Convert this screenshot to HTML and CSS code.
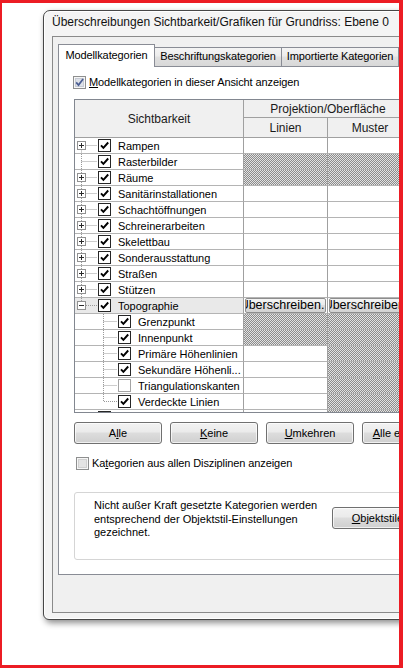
FILE: index.html
```html
<!DOCTYPE html>
<html lang="de">
<head>
    <meta charset="UTF-8">
    <meta name="viewport" content="width=device-width, initial-scale=1.0">
    <title>Überschreibungen Sichtbarkeit/Grafiken</title>
    <link rel="stylesheet" href="styles.css">
</head>
<body>
    <svg class="defs" aria-hidden="true">
        <symbol id="tw-first">
            <path d="M6.5 7.5V15M6.5 7.5H22" stroke="#9a9a9a" stroke-dasharray="1 1" fill="none"/>
            <rect x="2.5" y="3.5" width="8" height="8" fill="#fff" stroke="#919191"/>
            <path d="M4 7.5h5M6.5 5v5" stroke="#2a2a2a"/>
        </symbol>
        <symbol id="tw-plus">
            <path d="M6.5 0V15M6.5 7.5H22" stroke="#9a9a9a" stroke-dasharray="1 1" fill="none"/>
            <rect x="2.5" y="3.5" width="8" height="8" fill="#fff" stroke="#919191"/>
            <path d="M4 7.5h5M6.5 5v5" stroke="#2a2a2a"/>
        </symbol>
        <symbol id="tw-leaf">
            <path d="M6.5 0V15M6.5 7.5H22" stroke="#9a9a9a" stroke-dasharray="1 1" fill="none"/>
        </symbol>
        <symbol id="tw-minus">
            <path d="M6.5 0V7.5H22" stroke="#9a9a9a" stroke-dasharray="1 1" fill="none"/>
            <rect x="2.5" y="3.5" width="8" height="8" fill="#fff" stroke="#919191"/>
            <path d="M4 7.5h5" stroke="#2a2a2a"/>
        </symbol>
        <symbol id="tw-box">
            <rect x="2.5" y="3.5" width="8" height="8" fill="#fff" stroke="#919191"/>
            <path d="M4 7.5h5M6.5 5v5" stroke="#2a2a2a"/>
        </symbol>
        <symbol id="tw-child">
            <path d="M28.5 0V15M28.5 7.5H42" stroke="#9a9a9a" stroke-dasharray="1 1" fill="none"/>
        </symbol>
        <symbol id="tw-child-last">
            <path d="M28.5 0V7.5H42" stroke="#9a9a9a" stroke-dasharray="1 1" fill="none"/>
        </symbol>
        <symbol id="cb-on">
            <rect x=".5" y=".5" width="12" height="12" fill="#fff" stroke="#262626"/>
            <path d="M3 6.3l2.4 2.6 4.8-5.4" fill="none" stroke="#000" stroke-width="1.9"/>
        </symbol>
        <symbol id="cb-off">
            <rect x=".5" y=".5" width="12" height="12" fill="#fff" stroke="#a4a4a4"/>
        </symbol>
        <symbol id="cbv-on">
            <rect x=".5" y=".5" width="12" height="12" fill="#f6f6f6" stroke="#8e8f8f"/>
            <rect x="2.5" y="2.5" width="8" height="8" fill="#dde1e8" stroke="#c6cad3"/>
            <path d="M3.2 6.4l2.3 2.7 4.6-6.2" fill="none" stroke="#4b5e93" stroke-width="1.7"/>
        </symbol>
        <symbol id="cbv-off">
            <rect x=".5" y=".5" width="12" height="12" fill="#f6f6f6" stroke="#8e8f8f"/>
            <rect x="2.5" y="2.5" width="8" height="8" fill="#e4e4e4" stroke="#d0d0d0"/>
        </symbol>
    </svg>

    <div class="screen">
        <div class="dialog">
            <div class="titlebar">Überschreibungen Sichtbarkeit/Grafiken für Grundriss: Ebene 0</div>

            <div class="client">
                <div class="tabs">
                    <div class="tab tab-model active">Modellkategorien</div>
                    <div class="tab tab-annot">Beschriftungskategorien</div>
                    <div class="tab tab-import">Importierte Kategorien</div>
                </div>

                <div class="panel">
                    <div class="check-row top">
                        <svg class="cbv"><use href="#cbv-on"/></svg>
                        <span><u>M</u>odellkategorien in dieser Ansicht anzeigen</span>
                    </div>

                    <div class="vg">
                        <div class="vg-head">
                            <div class="h-cell h-name">Sichtbarkeit</div>
                            <div class="h-cell h-proj">Projektion/Oberfläche</div>
                            <div class="h-cell h-lines">Linien</div>
                            <div class="h-cell h-pattern">Muster</div>
                        </div>

                        <div class="vg-row">
                            <div class="vg-name"><svg class="twig"><use href="#tw-first"/></svg><svg class="cb"><use href="#cb-on"/></svg><span class="vg-label">Rampen</span></div>
                            <div class="vg-cell"></div>
                            <div class="vg-cell"></div>
                        </div>
                        <div class="vg-row">
                            <div class="vg-name"><svg class="twig"><use href="#tw-leaf"/></svg><svg class="cb"><use href="#cb-on"/></svg><span class="vg-label">Rasterbilder</span></div>
                            <div class="vg-cell hatch"></div>
                            <div class="vg-cell hatch"></div>
                        </div>
                        <div class="vg-row">
                            <div class="vg-name"><svg class="twig"><use href="#tw-plus"/></svg><svg class="cb"><use href="#cb-on"/></svg><span class="vg-label">Räume</span></div>
                            <div class="vg-cell hatch"></div>
                            <div class="vg-cell hatch"></div>
                        </div>
                        <div class="vg-row">
                            <div class="vg-name"><svg class="twig"><use href="#tw-plus"/></svg><svg class="cb"><use href="#cb-on"/></svg><span class="vg-label">Sanitärinstallationen</span></div>
                            <div class="vg-cell"></div>
                            <div class="vg-cell"></div>
                        </div>
                        <div class="vg-row">
                            <div class="vg-name"><svg class="twig"><use href="#tw-plus"/></svg><svg class="cb"><use href="#cb-on"/></svg><span class="vg-label">Schachtöffnungen</span></div>
                            <div class="vg-cell"></div>
                            <div class="vg-cell"></div>
                        </div>
                        <div class="vg-row">
                            <div class="vg-name"><svg class="twig"><use href="#tw-plus"/></svg><svg class="cb"><use href="#cb-on"/></svg><span class="vg-label">Schreinerarbeiten</span></div>
                            <div class="vg-cell"></div>
                            <div class="vg-cell"></div>
                        </div>
                        <div class="vg-row">
                            <div class="vg-name"><svg class="twig"><use href="#tw-plus"/></svg><svg class="cb"><use href="#cb-on"/></svg><span class="vg-label">Skelettbau</span></div>
                            <div class="vg-cell"></div>
                            <div class="vg-cell"></div>
                        </div>
                        <div class="vg-row">
                            <div class="vg-name"><svg class="twig"><use href="#tw-plus"/></svg><svg class="cb"><use href="#cb-on"/></svg><span class="vg-label">Sonderausstattung</span></div>
                            <div class="vg-cell"></div>
                            <div class="vg-cell"></div>
                        </div>
                        <div class="vg-row">
                            <div class="vg-name"><svg class="twig"><use href="#tw-plus"/></svg><svg class="cb"><use href="#cb-on"/></svg><span class="vg-label">Straßen</span></div>
                            <div class="vg-cell"></div>
                            <div class="vg-cell"></div>
                        </div>
                        <div class="vg-row">
                            <div class="vg-name"><svg class="twig"><use href="#tw-plus"/></svg><svg class="cb"><use href="#cb-on"/></svg><span class="vg-label">Stützen</span></div>
                            <div class="vg-cell"></div>
                            <div class="vg-cell"></div>
                        </div>
                        <div class="vg-row selected">
                            <div class="vg-name"><svg class="twig"><use href="#tw-minus"/></svg><svg class="cb"><use href="#cb-on"/></svg><span class="vg-label">Topographie</span></div>
                            <div class="vg-cell"><div class="ovr"><span>Überschreiben...</span></div></div>
                            <div class="vg-cell"><div class="ovr"><span>Überschreiben...</span></div></div>
                        </div>
                        <div class="vg-row">
                            <div class="vg-name"><svg class="twig child"><use href="#tw-child"/></svg><svg class="cb"><use href="#cb-on"/></svg><span class="vg-label">Grenzpunkt</span></div>
                            <div class="vg-cell hatch"></div>
                            <div class="vg-cell hatch"></div>
                        </div>
                        <div class="vg-row">
                            <div class="vg-name"><svg class="twig child"><use href="#tw-child"/></svg><svg class="cb"><use href="#cb-on"/></svg><span class="vg-label">Innenpunkt</span></div>
                            <div class="vg-cell hatch"></div>
                            <div class="vg-cell hatch"></div>
                        </div>
                        <div class="vg-row">
                            <div class="vg-name"><svg class="twig child"><use href="#tw-child"/></svg><svg class="cb"><use href="#cb-on"/></svg><span class="vg-label">Primäre Höhenlinien</span></div>
                            <div class="vg-cell"></div>
                            <div class="vg-cell hatch"></div>
                        </div>
                        <div class="vg-row">
                            <div class="vg-name"><svg class="twig child"><use href="#tw-child"/></svg><svg class="cb"><use href="#cb-on"/></svg><span class="vg-label">Sekundäre Höhenli...</span></div>
                            <div class="vg-cell"></div>
                            <div class="vg-cell hatch"></div>
                        </div>
                        <div class="vg-row">
                            <div class="vg-name"><svg class="twig child"><use href="#tw-child"/></svg><svg class="cb"><use href="#cb-off"/></svg><span class="vg-label">Triangulationskanten</span></div>
                            <div class="vg-cell"></div>
                            <div class="vg-cell hatch"></div>
                        </div>
                        <div class="vg-row">
                            <div class="vg-name"><svg class="twig child"><use href="#tw-child-last"/></svg><svg class="cb"><use href="#cb-on"/></svg><span class="vg-label">Verdeckte Linien</span></div>
                            <div class="vg-cell"></div>
                            <div class="vg-cell hatch"></div>
                        </div>
                        <div class="vg-row">
                            <div class="vg-name"><svg class="twig"><use href="#tw-box"/></svg><svg class="cb"><use href="#cb-on"/></svg><span class="vg-label">Tragwerksstützen</span></div>
                            <div class="vg-cell"></div>
                            <div class="vg-cell hatch"></div>
                        </div>
                    </div>

                    <div class="buttons">
                        <button class="btn">A<u>l</u>le</button>
                        <button class="btn"><u>K</u>eine</button>
                        <button class="btn"><u>U</u>mkehren</button>
                        <button class="btn"><u>A</u>lle erweitern</button>
                    </div>

                    <div class="check-row bottom">
                        <svg class="cbv"><use href="#cbv-off"/></svg>
                        <span>Ka<u>t</u>egorien aus allen Disziplinen anzeigen</span>
                    </div>

                    <div class="group">
                        <p class="group-text">
                            Nicht außer Kraft gesetzte Kategorien werden<br>
                            entsprechend der Objektstil-Einstellungen<br>
                            gezeichnet.
                        </p>
                        <button class="btn btn-style"><u>O</u>bjektstile...</button>
                    </div>
                </div>
            </div>
        </div>
    </div>
</body>
</html>
```

FILE: styles.css
```css
* {
    box-sizing: border-box;
}

body {
    margin: 0;
    font-family: "Liberation Sans", Arial, sans-serif;
    font-size: 11px;
    color: #000;
    background: #fff;
}

.defs {
    display: block;
    width: 0;
    height: 0;
    overflow: hidden;
}

.screen {
    width: 403px;
    height: 668px;
    border-style: solid;
    border-color: #ec1c24;
    border-width: 3px 4px 3px 2px;
    background: #fff;
    overflow: hidden;
    padding: 7px 0 0 41px;
}

/* window frame */

.dialog {
    width: 440px;
    border: 1px solid #474747;
    border-radius: 7px 7px 6px 6px;
    background: #f4f4f4;
    padding: 0 0 6px 8px;
    box-shadow: 2px 3px 6px rgba(0, 0, 0, 0.45), inset 0 0 0 1px #fff;
}

.titlebar {
    height: 25px;
    line-height: 23px;
    font-size: 12px;
    white-space: nowrap;
    color: #111;
}

.client {
    height: 577px;
    border: 1px solid #8a8a8a;
    background: #f0f0f0;
    padding: 7px 0 0 5px;
}

/* tabs */

.tabs {
    display: flex;
    align-items: flex-end;
    height: 22px;
    position: relative;
    z-index: 1;
}

.tab {
    height: 19px;
    border: 1px solid #898c95;
    border-bottom: none;
    background: linear-gradient(#f4f4f4, #ececec 45%, #e0e0e0 50%, #d8d8d8);
    text-align: center;
    line-height: 17px;
    letter-spacing: -0.1px;
    white-space: nowrap;
}

.tab.active {
    height: 23px;
    margin-bottom: -1px;
    background: #fff;
    line-height: 20px;
}

.tab-model {
    width: 97px;
}

.tab-annot {
    width: 127px;
    border-left: none;
}

.tab-import {
    width: 117px;
    border-left: none;
}

.panel {
    height: 509px;
    border: 1px solid #898c95;
    background: #fff;
    padding: 8px 0 0 15px;
}

/* checkboxes */

.check-row {
    display: flex;
    align-items: center;
    height: 14px;
    gap: 3px;
    white-space: nowrap;
    letter-spacing: -0.1px;
}

.check-row.top {
    margin-left: -1px;
}

.check-row.bottom {
    margin-top: 12px;
    margin-left: 2px;
}

.cbv {
    width: 13px;
    height: 13px;
    flex-shrink: 0;
}

/* visibility grid */

.vg {
    margin-top: 10px;
    width: 430px;
    height: 314px;
    border: 1px solid #828790;
    overflow: hidden;
}

.vg-head {
    display: grid;
    grid-template-columns: 169px 84px 85px;
    grid-template-rows: 18px 20px;
    background: #f0f0f0;
    font-size: 12px;
}

.h-cell {
    display: flex;
    align-items: center;
    justify-content: center;
    border-right: 1px solid #a0a0a0;
    border-bottom: 1px solid #a0a0a0;
    white-space: nowrap;
    color: #1a1a1a;
}

.h-name {
    grid-row: 1 / 3;
    grid-column: 1;
}

.h-proj {
    grid-row: 1;
    grid-column: 2 / 4;
}

.h-lines {
    grid-row: 2;
    grid-column: 2;
}

.h-pattern {
    grid-row: 2;
    grid-column: 3;
}

.vg-row {
    display: grid;
    grid-template-columns: 169px 84px 85px;
    height: 16px;
}

.vg-name,
.vg-cell {
    border-right: 1px solid #a0a0a0;
    border-bottom: 1px solid #b4b4b4;
    overflow: hidden;
}

.vg-name {
    display: flex;
    align-items: center;
    white-space: nowrap;
}

.vg-row.selected .vg-name {
    background: #e9e9e9;
}

.twig {
    width: 22px;
    height: 15px;
    flex-shrink: 0;
}

.twig.child {
    width: 42px;
}

.cb {
    width: 13px;
    height: 13px;
    flex-shrink: 0;
    margin-left: 1px;
}

.vg-label {
    margin-left: 7px;
}

.hatch {
    background-color: #fff;
    background-image: repeating-conic-gradient(#8c8c8c 0% 25%, #e2e2e2 0% 50%);
    background-size: 2px 2px;
}

.vg-cell {
    display: flex;
    align-items: center;
}

.ovr {
    display: flex;
    justify-content: center;
    overflow: hidden;
    width: 81px;
    height: 15px;
    margin-left: 1px;
    border: 1px solid #8d8d8d;
    border-radius: 2px;
    background: linear-gradient(#f4f4f4, #ebebeb 45%, #dddddd 50%, #d2d2d2);
    font-size: 12.5px;
    line-height: 12px;
}

.ovr span {
    flex-shrink: 0;
    white-space: nowrap;
}

/* buttons */

.buttons {
    display: flex;
    gap: 8px;
    margin-top: 9px;
}

.btn {
    flex-shrink: 0;
    width: 88px;
    height: 22px;
    padding: 0;
    border: 1px solid #707070;
    border-radius: 3px;
    background: linear-gradient(#f2f2f2, #ebebeb 45%, #dddddd 50%, #cfcfcf);
    box-shadow: inset 0 0 0 1px rgba(255, 255, 255, 0.7);
    font-family: "Liberation Sans", Arial, sans-serif;
    font-size: 11px;
    color: #000;
    white-space: nowrap;
}

/* group box */

.group {
    display: flex;
    margin-top: 22px;
    width: 400px;
    height: 68px;
    border: 1px solid #d5d5d5;
    border-radius: 3px;
    padding: 6px 0 0 19px;
}

.group-text {
    margin: 0;
    width: 238px;
    flex-shrink: 0;
    line-height: 13.5px;
}

.btn-style {
    width: 100px;
    margin-top: 8px;
}
```
